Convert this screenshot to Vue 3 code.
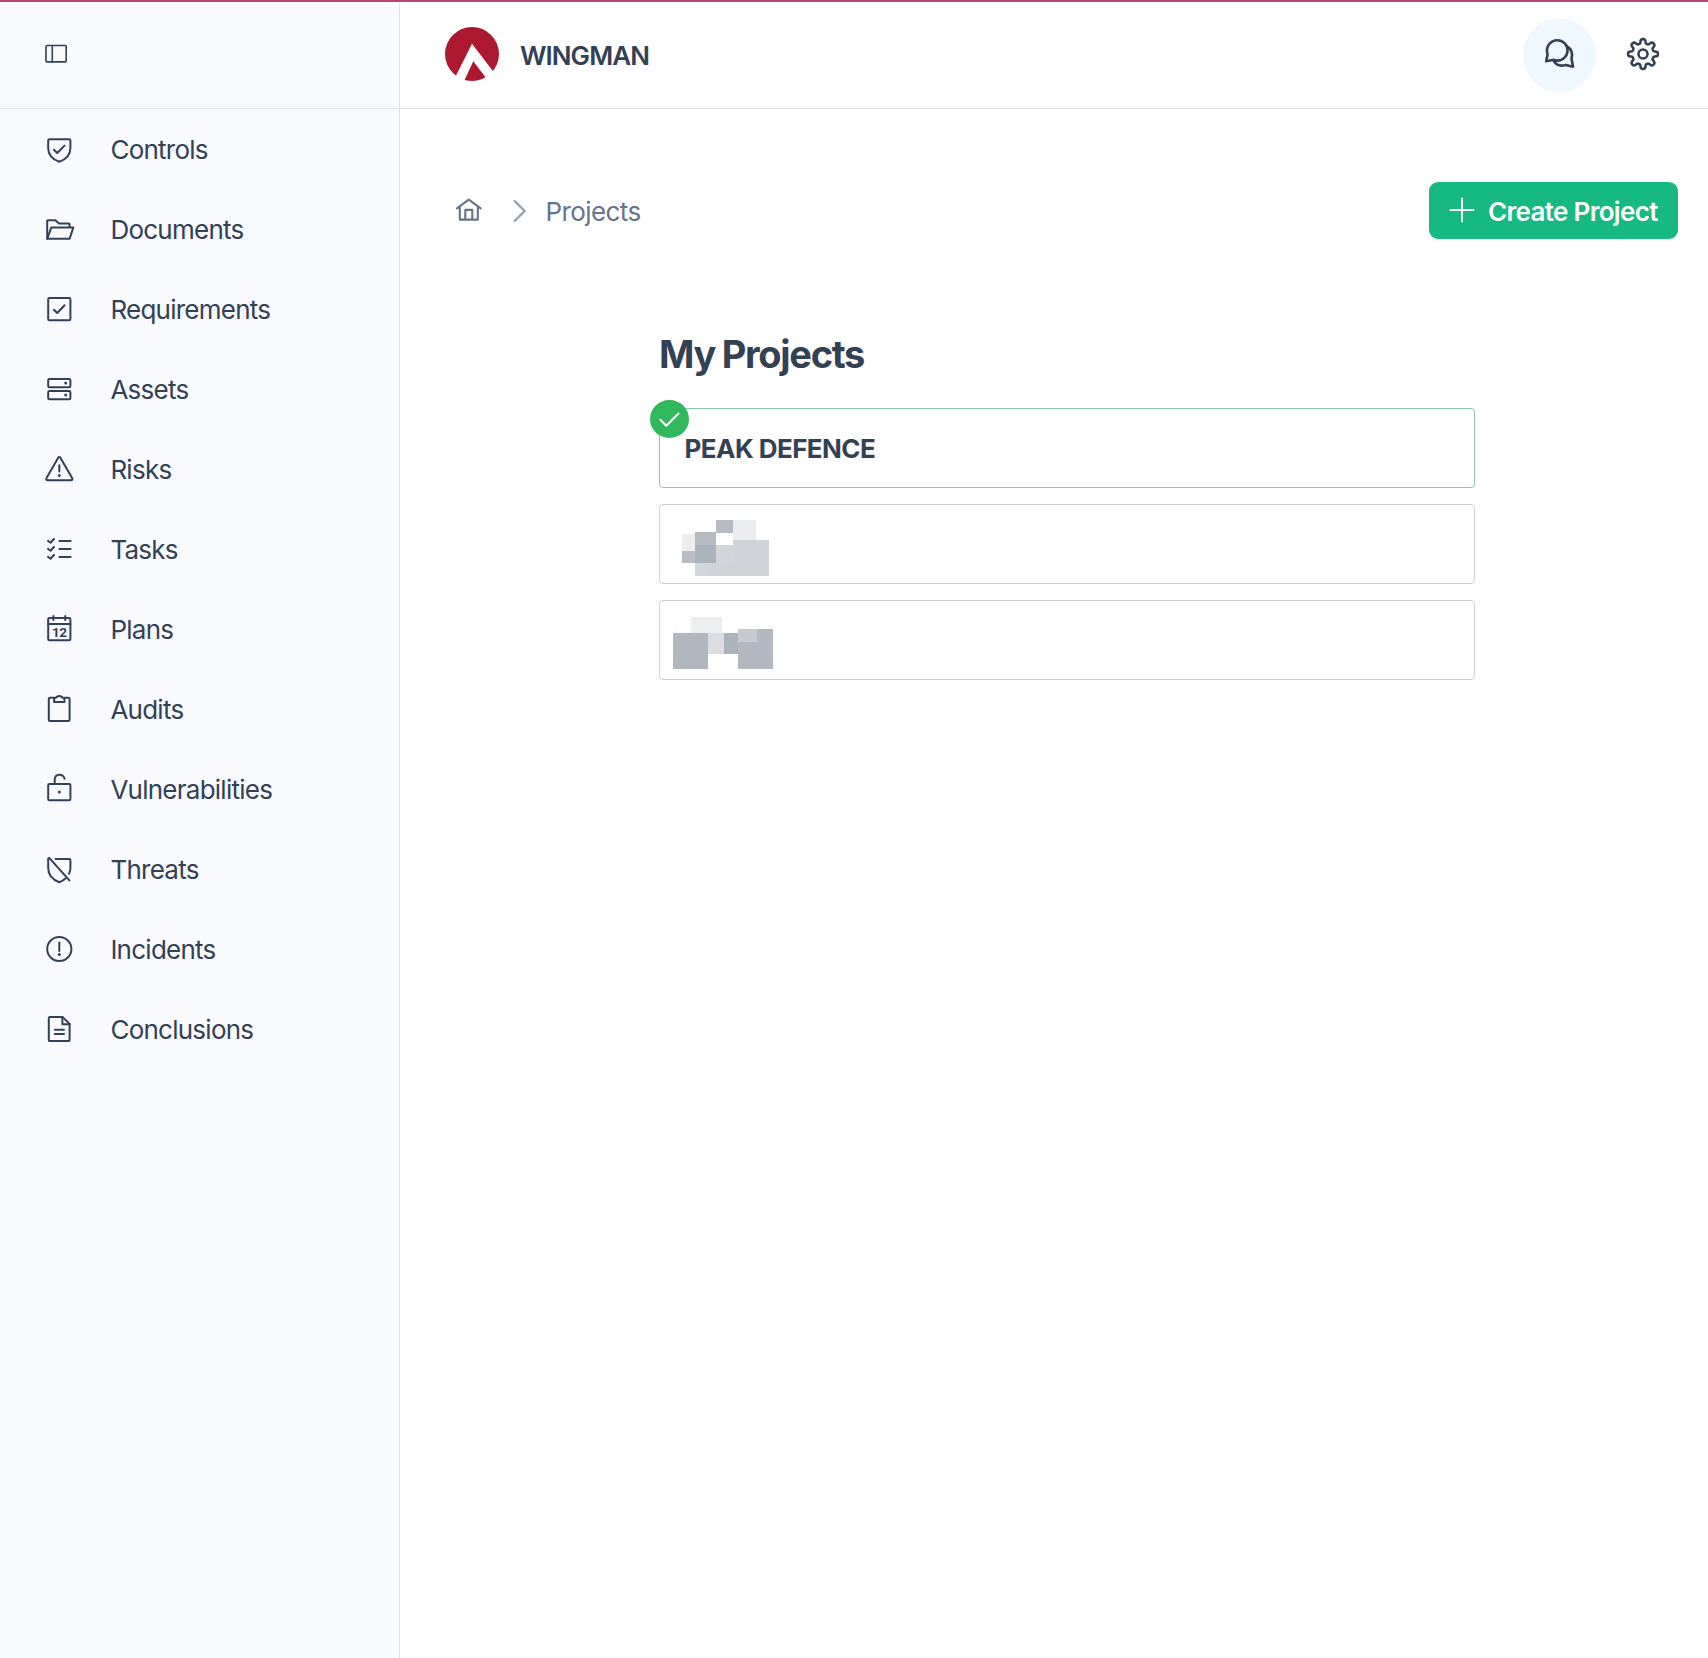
<script setup>
const items = [
  { label: 'Controls', paths: ['M6.4 6.2H26.2Q27.4 6.2 27.4 7.4V15C27.4 22 22.5 26.5 16.3 28.8C10 26.5 5.2 22 5.2 15V7.4Q5.2 6.2 6.4 6.2Z', 'M10.9 16.8L14.2 20L21.6 12.6'] },
  { label: 'Documents', paths: ['M4.2 25.8V7.8Q4.2 7.2 4.8 7.2H12.4L16 10.5H25.9Q26.5 10.5 26.5 11.1V14', 'M4.2 25.8L8.3 14.4H30.4L26.6 25.8Z'] },
  { label: 'Requirements', rects: [[5, 22.2]], paths: ['M10.9 16.8L14.2 20L21.6 12.2'] },
  { label: 'Assets', rects: [[6, 8.2], [18, 8.2]], paths: [], dots: [[22.7, 10], [22.7, 22]] },
  { label: 'Risks', paths: ['M15.2 4.7Q16.3 3.2 17.4 4.7L29.2 25.2Q29.8 27.2 28 27.2H4.6Q2.8 27.2 3.4 25.2Z', 'M16.3 12.2V18.6'], dots: [[16.3, 22.6]] },
  { label: 'Tasks', paths: ['M16.4 8H27.6M16.4 16H27.6M16.4 24H27.6', 'M5 7.8L7.5 9.8L11 6M5 15.8L7.5 17.8L11 14M5 23.8L7.5 25.8L11 22'] },
  { label: 'Plans', rects: [[5, 22.2]], paths: ['M5.2 11.1H27.4', 'M10.4 3V7M22.2 3V7'], day: '12' },
  { label: 'Audits', paths: ['M11 4.8H7Q5.8 4.8 5.8 6V26.7Q5.8 27.9 7 27.9H25.4Q26.6 27.9 26.6 26.7V6Q26.6 4.8 25.4 4.8H21.6', 'M11.1 8.9V6.4Q11.1 5 12.6 4.8Q16.3 1 20 4.8Q21.5 5 21.5 6.4V8.9Z'] },
  { label: 'Vulnerabilities', rects: [[10.9, 16.3]], paths: ['M11.7 10.5V6.8C11.7 .4 20 .1 21.6 5.8'], dots: [[16.3, 19]] },
  { label: 'Threats', paths: ['M12.6 6.1H26.2Q27.4 6.1 27.4 7.3V15Q27.4 18 26 20.8', 'M5.2 5.6V15C5.2 22 10 26.8 16.3 29.2Q20 27.8 22.8 25.2', 'M6.2 4.8L26.4 27.4'] },
  { label: 'Incidents', paths: ['M16.3 3.9A12.1 12.1 0 1 1 16.3 28.1A12.1 12.1 0 1 1 16.3 3.9Z', 'M16.3 9.4V18'], dots: [[16.3, 21.5]] },
  { label: 'Conclusions', paths: ['M7 3.9H19.5L26.6 11V26.9Q26.6 28.1 25.4 28.1H7Q5.8 28.1 5.8 26.9V5.1Q5.8 3.9 7 3.9Z', 'M19.4 4V11.2H26.5', 'M11.8 16.7H21M11.8 21H21'] },
]

const mosaicA = [
  [126, 132, 39, 51, '#ebedef'], [126, 183, 39, 36, '#b9bec6'],
  [165, 126, 63, 39, '#b5bac3'], [165, 165, 63, 54, '#abb3bc'],
  [228, 90, 51, 39, '#b5bac3'], [279, 90, 69, 60, '#ebecee'],
  [228, 165, 51, 54, '#d2d5da'], [165, 219, 45, 39, '#d3d6db'],
  [210, 219, 69, 39, '#d0d3d8'], [279, 150, 108, 108, '#d0d3d8'],
]
const mosaicB = [
  [99, 381, 54, 48, '#fdfdfd'], [153, 381, 93, 48, '#edeef0'],
  [99, 429, 105, 108, '#b0b7bf'], [204, 429, 48, 63, '#dddee2'],
  [252, 429, 42, 63, '#abb3bc'], [294, 417, 105, 120, '#b4b8c0'],
  [294, 417, 57, 39, '#c7cacf'],
]

// Outline of an eight-toothed cog with rounded teeth
const gear = 'M' + Array.from({ length: 180 }, (_, i) => {
  const a = (i * Math.PI) / 90
  const r = 12.8 + (2.1 * Math.tanh(1.9 * Math.cos(8 * a))) / Math.tanh(1.9)
  return `${(17 + r * Math.sin(a)).toFixed(2)} ${(17 - r * Math.cos(a)).toFixed(2)}`
}).join('L') + 'Z'
</script>

<template>
  <div class="app">
    <div class="progress"></div>
    <div class="shell">
      <aside class="sidebar">
        <div class="sidebar-top">
          <svg width="24" height="20" viewBox="0 0 24 20" class="line thin">
            <rect x="2" y="1.5" width="20.2" height="16.4" rx="1" /><path d="M8.3 1.5V18" />
          </svg>
        </div>
        <nav>
          <a v-for="it in items" :key="it.label" class="nav-item">
            <svg class="line" width="32" height="32" viewBox="0 0 32 32">
              <rect v-for="r in it.rects || []" :key="r[0]" x="5.2" :y="r[0]" width="22.2" :height="r[1]" rx="1.2" />
              <path v-for="p in it.paths" :key="p" :d="p" />
              <circle v-for="d in it.dots || []" :key="d[1]" :cx="d[0]" :cy="d[1]" r="1.5" class="dot" />
              <text v-if="it.day" x="16.3" y="23.8" class="day">{{ it.day }}</text>
            </svg>
            <span>{{ it.label }}</span>
          </a>
        </nav>
      </aside>

      <div class="content">
        <header class="topbar">
          <svg width="54" height="54" viewBox="0 0 54 54">
            <circle cx="27" cy="27" r="27" fill="#ad1831" />
            <path d="M27 16.7L54 52L46 57.4L28.3 34.3L17 58.5L6 58.6Z" fill="#fff" />
          </svg>
          <span class="brand">WINGMAN</span>
          <div class="actions">
            <button class="chat">
              <svg width="32" height="32" viewBox="0 0 32 32" class="line bold">
                <path d="M2.2 23.2L3.6 16.3C1.2 9.2 6.2 2.2 13.3 2.2A10.2 10.2 0 0 1 13.3 22.6Q11.3 22.6 9.6 21.8Z" />
                <path d="M22.8 8.2C27.4 11 29 15.2 27.5 20.8L29 28.7L21.8 26.9C16.6 28.6 12 27 9.4 22.4" />
              </svg>
            </button>
            <svg width="34" height="34" viewBox="0 0 34 34" class="line bold gear">
              <path :d="gear" /><circle cx="17" cy="17" r="4.5" />
            </svg>
          </div>
        </header>

        <main>
          <div class="toolbar">
            <svg width="28" height="26" viewBox="0 0 28 26" class="line home">
              <path d="M1.9 11.3L13.8 2.6L25.7 11.3M4.8 9.5V22.6H22.8V9.5M10.3 22.4V12.9H17.3V22.4" />
            </svg>
            <svg width="16" height="26" viewBox="0 0 16 26" class="line chevron"><path d="M2.7 3.2L12.7 13L2.7 22.8" /></svg>
            <span class="crumb">Projects</span>
            <button class="create">
              <svg width="26" height="26" viewBox="0 0 26 26" class="line"><path d="M13 1.5V24.5M1.5 13H24.5" /></svg>
              <span>Create Project</span>
            </button>
          </div>

          <section class="projects">
            <h1>My Projects</h1>
            <div class="card selected">
              <span class="badge">
                <svg width="39" height="38" viewBox="0 0 39 38" class="line"><path d="M10.4 19.7L16.3 25.7L28.5 13.5" /></svg>
              </span>
              <span class="name">PEAK DEFENCE</span>
            </div>
            <div class="card">
              <svg class="mosaic-a" width="87" height="56" viewBox="126 90 261 168" shape-rendering="crispEdges">
                <rect v-for="(b, i) in mosaicA" :key="i" :x="b[0]" :y="b[1]" :width="b[2]" :height="b[3]" :fill="b[4]" />
              </svg>
            </div>
            <div class="card">
              <svg class="mosaic-b" width="100" height="52" viewBox="99 381 300 156" shape-rendering="crispEdges">
                <rect v-for="(b, i) in mosaicB" :key="i" :x="b[0]" :y="b[1]" :width="b[2]" :height="b[3]" :fill="b[4]" />
              </svg>
            </div>
          </section>
        </main>
      </div>
    </div>
  </div>
</template>

<style>
body { margin: 0; background: #fff; }
</style>

<style scoped>
* { box-sizing: border-box; }
.app { height: 1658px; display: flex; flex-direction: column; font-family: Inter, "Liberation Sans", sans-serif; font-size: 26px; color: #334155; overflow: hidden; }
.progress { height: 2px; background: #b44775; flex: none; }
.shell { display: flex; flex: 1; }
svg { display: block; flex: none; }
.line { fill: none; stroke: currentColor; stroke-width: 2; stroke-linejoin: round; stroke-linecap: round; }
.line.thin { stroke-width: 1.6; }
.line.bold { stroke-width: 2.6; }
.dot { fill: currentColor; stroke: none; }
.day { fill: currentColor; stroke: none; font-family: Roboto, sans-serif; font-size: 13.5px; font-weight: 700; text-anchor: middle; letter-spacing: -0.4px; }
.sidebar { width: 400px; flex: none; background: #f9fafe; border-right: 1px solid #e2e4e9; }
.sidebar-top { height: 107px; border-bottom: 1px solid #e2e4e9; padding: 42px 0 0 44px; }
nav { padding-top: 1px; }
.nav-item { display: flex; align-items: center; height: 80px; padding-left: 43px; gap: 35.4px; line-height: 32px; }
.nav-item svg { margin-top: -2px; }
.nav-item span { letter-spacing: -0.75px; }
.content { flex: 1; }
.topbar { height: 107px; border-bottom: 1px solid #e2e4e9; padding: 0 48px 2px 45px; display: flex; align-items: center; }
.brand { margin-left: 21px; font-weight: 600; padding-top: 3px; letter-spacing: -0.95px; }
.actions { margin-left: auto; display: flex; align-items: center; gap: 30px; }
button { border: 0; margin: 0; font: inherit; color: inherit; }
.chat { width: 73px; height: 74px; border-radius: 50%; background: #f0f8ff; padding: 0 0 2px; display: flex; align-items: center; justify-content: center; margin-top: 2px; }
.gear { margin-top: -1px; }
.toolbar { margin: 73px 30px 0 55px; height: 57px; display: flex; align-items: center; color: #64748b; }
.home { stroke-width: 2.1; margin-top: -1px; }
.chevron { color: #94a3b8; margin-left: 29px; stroke-width: 2.4; }
.crumb { margin-left: 17.5px; padding-top: 2px; letter-spacing: -0.6px; }
.create { margin-left: auto; width: 249px; height: 57px; border-radius: 9px; background: #15b981; color: #fff; display: flex; align-items: center; padding: 0 0 0 20px; font-weight: 600; }
.create svg { margin-top: -2px; }
.create span { margin-left: 13px; padding-top: 2px; white-space: nowrap; letter-spacing: -0.68px; }
.projects { width: 816px; margin: 89px 0 0 259px; }
h1 { margin: 0 0 28px; height: 52px; line-height: 53px; font-size: 38px; font-weight: 700; letter-spacing: -1.3px; word-spacing: -1px; }
.card { position: relative; height: 80px; margin-bottom: 16px; border: 1px solid #cdd2d8; border-radius: 4px; }
.card.selected { border-color: #8fc7ab; display: flex; align-items: center; padding-left: 24.5px; }
.badge { position: absolute; left: -10px; top: -9px; width: 39px; height: 38px; border-radius: 50%; background: #2fb85c; color: #fff; }
.name { font-weight: 700; letter-spacing: -0.55px; }
.mosaic-a { margin: 15px 0 0 22px; }
.mosaic-b { margin: 16px 0 0 13px; }
</style>
